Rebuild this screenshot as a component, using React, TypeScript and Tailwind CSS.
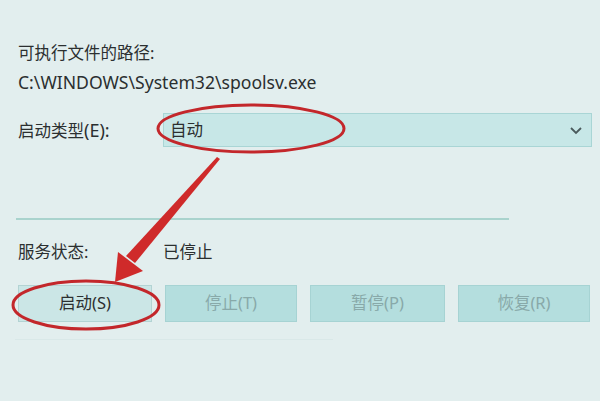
import React from "react";

const font = { fontFamily: '"Noto Sans", "Noto Sans CJK SC", sans-serif' };

export default function App() {
  return (
    <div
      className="relative w-[600px] h-[401px] overflow-hidden bg-[#e2eeee] text-[16.5px] text-[#2b2f30]"
      style={font}
    >
      <div className="flex flex-col pl-[18px] pt-[41px]">
        <div className="h-[24px] leading-[24px]">可执行文件的路径:</div>
        <div className="mt-[5px] h-[24px] text-[17.6px] leading-[24px]">C:\WINDOWS\System32\spoolsv.exe</div>
        <div className="mt-[19px] flex items-center">
          <div className="w-[145px] leading-[24px]">
            启动类型<span className="text-[18px]">(E):</span>
          </div>
          <div className="flex h-[34px] w-[429px] items-center justify-between border border-[#a9d5d5] bg-[#c7e7e7] pl-[6px] pr-[8px]">
            <span className="leading-[24px]">自动</span>
            <svg width="14" height="10" viewBox="0 0 14 10" className="text-[#4a5a5c]">
              <path d="M2 3 L7 8 L12 3" fill="none" stroke="currentColor" strokeWidth="1.8" />
            </svg>
          </div>
        </div>
        <div className="mt-[71px] -ml-[2px] h-[2px] w-[493px] bg-[#a9d3cd]" />
        <div className="mt-[20px] flex h-[24px] items-center leading-[24px]">
          <div className="w-[145px]">服务状态:</div>
          <div>已停止</div>
        </div>
        <div className="mt-[21px] flex gap-[13px]">
          <div className="flex h-[37px] w-[134px] items-center justify-center border border-[#b3d3d3] bg-[#cbe6e6] text-[#2b2f30]">
            启动(S)
          </div>
          <div className="flex h-[37px] w-[132px] items-center justify-center border border-[#a6d3d3] bg-[#b4dede] text-[#88a9a9]">
            停止(T)
          </div>
          <div className="flex h-[37px] w-[135px] items-center justify-center border border-[#a6d3d3] bg-[#b4dede] text-[#88a9a9]">
            暂停(P)
          </div>
          <div className="flex h-[37px] w-[132px] items-center justify-center border border-[#a6d3d3] bg-[#b4dede] text-[#88a9a9]">
            恢复(R)
          </div>
        </div>
        <div className="mt-[17px] -ml-[3px] h-[1px] w-[318px] bg-[#d9e8e8]" />
      </div>

      <svg
        className="pointer-events-none absolute left-0 top-0"
        width="600"
        height="401"
        viewBox="0 0 600 401"
      >
        <ellipse cx="251" cy="128.5" rx="93" ry="23.5" fill="none" stroke="#c3272b" strokeWidth="3" />
        <ellipse cx="86" cy="305" rx="73" ry="24" fill="none" stroke="#c3272b" strokeWidth="3" />
        <polygon points="217,157 220,159 135,263 126,256" fill="#cf2a2a" />
        <polygon points="115,282 118,252 143,271" fill="#cf2a2a" />
      </svg>
    </div>
  );
}
